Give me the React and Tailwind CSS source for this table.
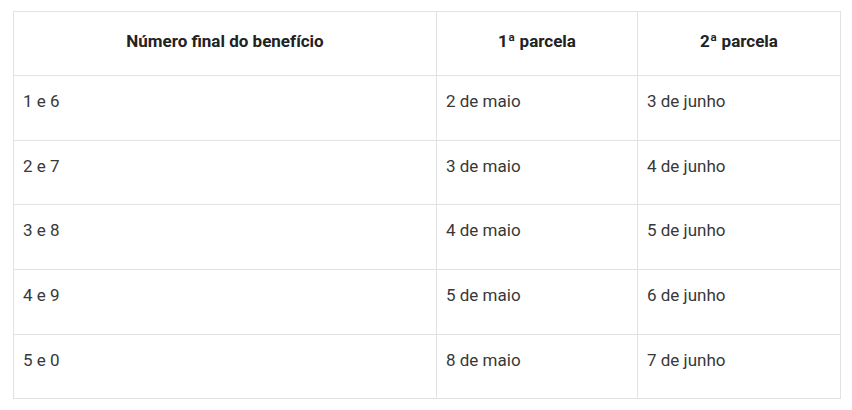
export default function App() {
  const rows = [
    ["1 e 6", "2 de maio", "3 de junho", 65],
    ["2 e 7", "3 de maio", "4 de junho", 64],
    ["3 e 8", "4 de maio", "5 de junho", 65],
    ["4 e 9", "5 de maio", "6 de junho", 65],
    ["5 e 0", "8 de maio", "7 de junho", 64],
  ];
  const cell = "border-r border-b border-[#e2e2e2] pl-[9px] pt-[13px] text-[17px] leading-6 text-[#383838]";
  const head = "h-[64px] border-r border-b border-[#e2e2e2] pt-[17px] text-center text-[17px] leading-6 font-bold text-[#222]";
  return (
    <div className="w-[852px] h-[410px] bg-white pt-[11px] pl-[13px]" style={{ fontFamily: "Roboto, 'Liberation Sans', sans-serif" }}>
      <div className="grid grid-cols-[423px_201px_203px] w-[828px] border-l border-t border-[#e2e2e2]">
        <div className={head}>Número final do benefício</div>
        <div className={head}>1ª parcela</div>
        <div className={head}>2ª parcela</div>
        {rows.map((r, i) => (
          <>
            <div key={i + "a"} className={cell} style={{ height: r[3] }}>{r[0]}</div>
            <div key={i + "b"} className={cell} style={{ height: r[3] }}>{r[1]}</div>
            <div key={i + "c"} className={cell} style={{ height: r[3] }}>{r[2]}</div>
          </>
        ))}
      </div>
    </div>
  );
}
